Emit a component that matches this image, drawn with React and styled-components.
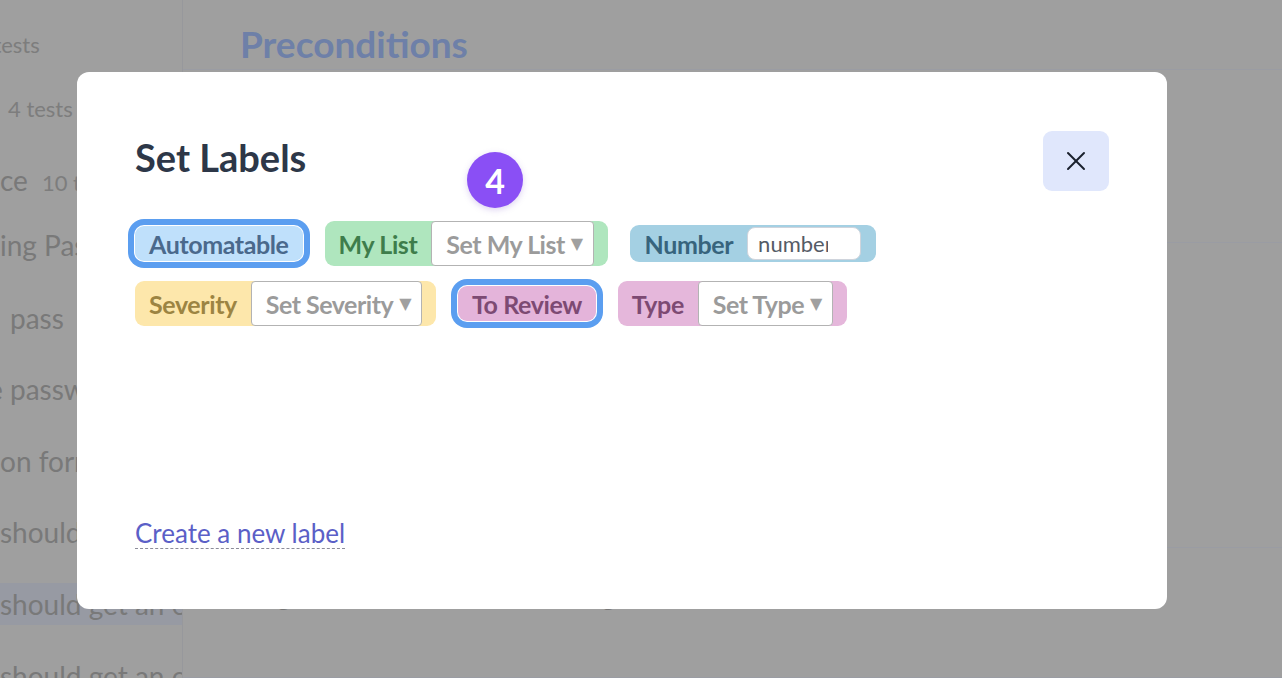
import React from "react"
import styled, { createGlobalStyle } from "styled-components"
import { X } from "lucide-react"

const GlobalStyle = createGlobalStyle`
  html, body {
    margin: 0;
    padding: 0;
    background: #9f9f9f;
  }
  body {
    font-family: Lato, "Open Sans", sans-serif;
  }
`

// Page behind the modal (already dimmed by the backdrop)

const Page = styled.div`
  position: relative;
  display: flex;
  width: 1282px;
  height: 678px;
  overflow: hidden;
  background: #9f9f9f;
`

const Sidebar = styled.aside`
  width: 182px;
  flex-shrink: 0;
  display: flex;
  flex-direction: column;
  overflow: hidden;
  border-right: 1px solid #97989c;
`

const SideItem = styled.div`
  flex-shrink: 0;
  height: 42px;
  margin-top: ${p => p.gap}px;
  display: flex;
  align-items: center;
  white-space: nowrap;
  background: ${p => (p.active ? "#979aa3" : "transparent")};
`

const SideText = styled.div`
  display: flex;
  align-items: baseline;
  gap: 14px;
  margin-left: ${p => p.shift}px;
`

const SideName = styled.span`
  font-size: 28px;
  color: #797979;
`

const SideCount = styled.span`
  font-size: 22px;
  color: #7d7d7d;
`

const Main = styled.main`
  flex: 1;
  display: flex;
  flex-direction: column;
`

const SectionTitle = styled.h2`
  margin: 0;
  padding: 24px 0 0 57px;
  height: 47px;
  font-size: 37px;
  font-weight: 700;
  line-height: 40px;
  color: #6e80a8;
  border-bottom: 1px solid #9a9ca3;
`

const MainRow = styled.div`
  flex-shrink: 0;
  height: ${p => p.h}px;
  box-sizing: border-box;
  border-bottom: 1px solid #9a9ca3;
  padding: 29px 0 0 39px;
  display: flex;
  gap: 256px;
  font-size: 28px;
  color: #777;
  white-space: nowrap;
`

// Modal

const Modal = styled.div`
  position: absolute;
  left: 77px;
  top: 72px;
  width: 1090px;
  height: 537px;
  box-sizing: border-box;
  padding: 59px 58px 60px;
  background: #fff;
  border-radius: 12px;
  display: flex;
  flex-direction: column;
`

const ModalHeader = styled.div`
  display: flex;
  align-items: flex-start;
  justify-content: space-between;
`

const Title = styled.h1`
  margin: 7px 0 0;
  font-size: 38px;
  line-height: 38px;
  font-weight: 700;
  color: #2d3748;
`

const CloseButton = styled.button`
  width: 66px;
  height: 60px;
  border: none;
  border-radius: 9px;
  background: #e0e7fc;
  color: #1a202c;
  display: flex;
  align-items: center;
  justify-content: center;
  padding: 0;
  cursor: pointer;
`

const StepBadge = styled.div`
  position: absolute;
  left: 390px;
  top: 80px;
  width: 56px;
  height: 56px;
  border-radius: 50%;
  background: #8a4ff5;
  color: #fff;
  font-size: 34px;
  font-weight: 700;
  display: flex;
  align-items: center;
  justify-content: center;
  box-shadow: 0 2px 6px rgba(120, 80, 200, 0.25);
`

const LabelList = styled.div`
  margin-top: 30px;
  display: flex;
  flex-wrap: wrap;
  align-items: center;
  gap: 15px 22px;
  width: 770px;
`

const Tag = styled.div`
  display: flex;
  align-items: stretch;
  gap: 14px;
  height: ${p => p.h || 45}px;
  box-sizing: border-box;
  padding: ${p => p.pad || "0 14px"};
  border-radius: 9px;
  background: ${p => p.bg};
  box-shadow: ${p => (p.selected ? "0 0 0 1px #fff, 0 0 0 7px #5b9ef0" : "none")};
`

const TagName = styled.span`
  display: flex;
  align-items: center;
  font-size: 25px;
  font-weight: 700;
  color: ${p => p.color};
  letter-spacing: -0.4px;
  white-space: nowrap;
`

const Select = styled.div`
  display: flex;
  align-items: center;
  gap: 6px;
  padding: 0 10px 0 14px;
  background: #fff;
  border: 1px solid #b3b3b3;
  border-radius: 4px;
  font-size: 25px;
  font-weight: 700;
  color: #9b9b9b;
  letter-spacing: -0.5px;
  white-space: nowrap;
`

const Caret = styled.span`
  font-family: "DejaVu Sans", sans-serif;
  font-size: 16px;
  color: #a0a0a0;
`

const InputBox = styled.div`
  width: 114px;
  margin: 1px 0;
  box-sizing: border-box;
  padding-left: 10px;
  background: #fff;
  border: 1px solid #cfd4dc;
  border-radius: 8px;
  display: flex;
  align-items: center;
`

const InputText = styled.span`
  width: 70px;
  overflow: hidden;
  font-size: 22px;
  color: #555b66;
  white-space: nowrap;
`

const CreateLink = styled.a`
  margin-top: auto;
  align-self: flex-start;
  font-size: 26px;
  color: #5b5fc7;
  text-decoration: none;
  border-bottom: 1px dashed #8c8c99;
  line-height: 28px;
  padding-bottom: 1px;
  cursor: pointer;
`

const sideItems = [
  { gap: 23, shift: -25, count: "5 tests" },
  { gap: 22, shift: 8, count: "4 tests" },
  { gap: 30, shift: 0, name: "ce", count: "10 tests" },
  { gap: 23, shift: 0, name: "ing Password" },
  { gap: 31, shift: 10, name: "pass" },
  { gap: 29, shift: -12, name: "e passwords" },
  { gap: 30, shift: 0, name: "on form" },
  { gap: 29, shift: 0, name: "should" },
  { gap: 30, shift: 0, name: "should get an error", active: true },
  { gap: 30, shift: 0, name: "should get an error" },
]

const labels = [
  { name: "Automatable", bg: "#bfe0fb", color: "#4a698c", selected: true, h: 35 },
  { name: "My List", bg: "#afe6be", color: "#3e7d4b", select: "Set My List" },
  { name: "Number", bg: "#a4d0e3", color: "#37647d", input: "number", h: 37 },
  { name: "Severity", bg: "#fde7ab", color: "#9c8442", select: "Set Severity" },
  { name: "To Review", bg: "#e4b4da", color: "#7d4a73", selected: true, h: 35 },
  { name: "Type", bg: "#e5b7db", color: "#7d4a73", select: "Set Type" },
]

export default function App() {
  return (
    <>
      <GlobalStyle />
      <Page>
        <Sidebar>
          {sideItems.map((item, i) => (
            <SideItem key={i} gap={item.gap} active={item.active}>
              <SideText shift={item.shift}>
                {item.name && <SideName>{item.name}</SideName>}
                {item.count && <SideCount>{item.count}</SideCount>}
              </SideText>
            </SideItem>
          ))}
        </Sidebar>
        <Main>
          <SectionTitle>Preconditions</SectionTitle>
          <MainRow h={173} />
          <MainRow h={305} />
          <MainRow h={130}>
            <span>Using</span>
            <span>Using</span>
          </MainRow>
        </Main>

        <Modal>
          <ModalHeader>
            <Title>Set Labels</Title>
            <CloseButton aria-label="Close">
              <X size={32} strokeWidth={1.5} />
            </CloseButton>
          </ModalHeader>
          <StepBadge>4</StepBadge>
          <LabelList>
            {labels.map(l => (
              <Tag
                key={l.name}
                bg={l.bg}
                selected={l.selected}
                h={l.h}
                pad={l.input ? "1px 15px" : undefined}
              >
                <TagName color={l.color}>{l.name}</TagName>
                {l.select && (
                  <Select>
                    {l.select}
                    <Caret>▼</Caret>
                  </Select>
                )}
                {l.input && (
                  <InputBox>
                    <InputText>{l.input}</InputText>
                  </InputBox>
                )}
              </Tag>
            ))}
          </LabelList>
          <CreateLink>Create a new label</CreateLink>
        </Modal>
      </Page>
    </>
  )
}
